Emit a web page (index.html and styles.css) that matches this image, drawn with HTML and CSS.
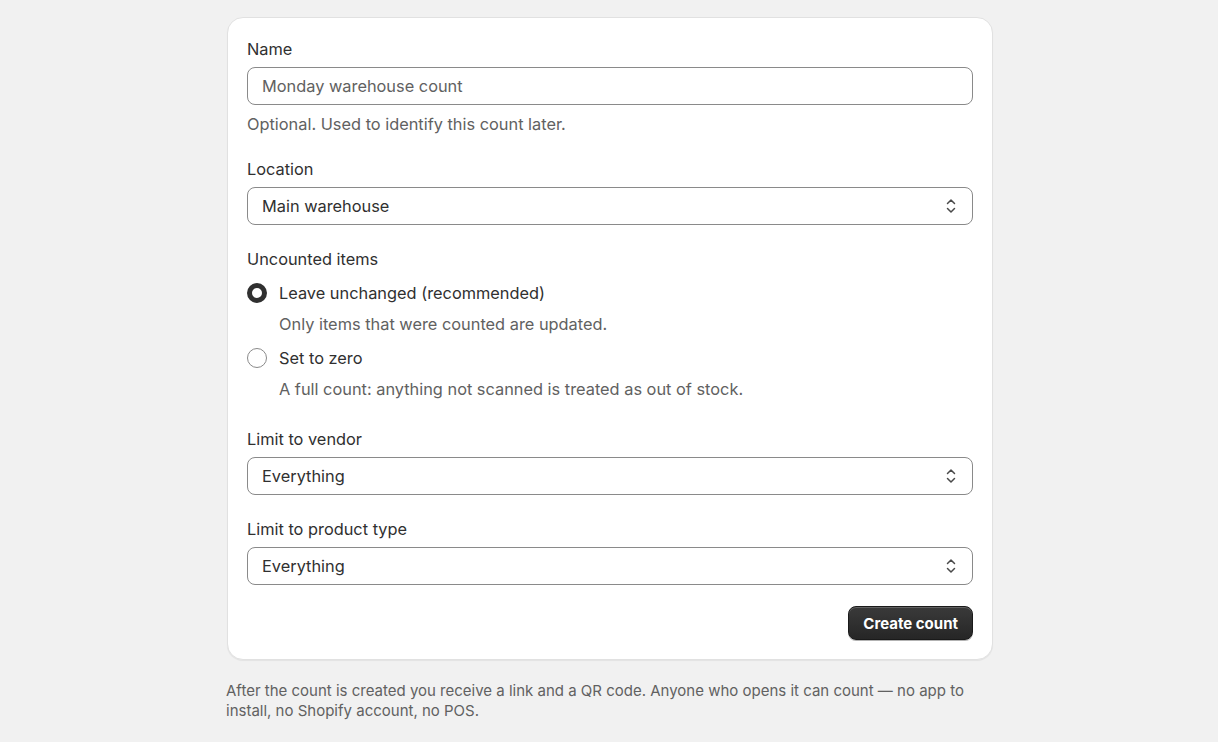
FILE: index.html
```html
<!DOCTYPE html>
<html lang="en">
<head>
<meta charset="utf-8">
<title>Create count</title>
<link rel="stylesheet" href="styles.css">
</head>
<body>
<main class="page">
  <form class="card">
    <div class="field">
      <label class="label">Name</label>
      <div class="input"><span class="placeholder">Monday warehouse count</span></div>
      <p class="help">Optional. Used to identify this count later.</p>
    </div>
    <div class="field">
      <label class="label">Location</label>
      <div class="input select"><span class="value">Main warehouse</span>
        <svg class="chev" width="12" height="18" viewBox="0 0 12 18"><path d="M2.5 6.5 6 3l3.5 3.5M2.5 11.5 6 15l3.5-3.5" fill="none" stroke="#4a4a4a" stroke-width="1.5" stroke-linecap="round" stroke-linejoin="round"/></svg>
      </div>
    </div>
    <div class="field radios">
      <label class="label">Uncounted items</label>
      <div class="radio-row">
        <span class="radio checked"></span><span class="radio-label">Leave unchanged (recommended)</span>
      </div>
      <p class="radio-desc">Only items that were counted are updated.</p>
      <div class="radio-row second">
        <span class="radio"></span><span class="radio-label">Set to zero</span>
      </div>
      <p class="radio-desc">A full count: anything not scanned is treated as out of stock.</p>
    </div>
    <div class="field after-radios">
      <label class="label">Limit to vendor</label>
      <div class="input select"><span class="value">Everything</span>
        <svg class="chev" width="12" height="18" viewBox="0 0 12 18"><path d="M2.5 6.5 6 3l3.5 3.5M2.5 11.5 6 15l3.5-3.5" fill="none" stroke="#4a4a4a" stroke-width="1.5" stroke-linecap="round" stroke-linejoin="round"/></svg>
      </div>
    </div>
    <div class="field product">
      <label class="label">Limit to product type</label>
      <div class="input select"><span class="value">Everything</span>
        <svg class="chev" width="12" height="18" viewBox="0 0 12 18"><path d="M2.5 6.5 6 3l3.5 3.5M2.5 11.5 6 15l3.5-3.5" fill="none" stroke="#4a4a4a" stroke-width="1.5" stroke-linecap="round" stroke-linejoin="round"/></svg>
      </div>
    </div>
    <div class="actions">
      <button type="button" class="btn">Create count</button>
    </div>
  </form>
  <p class="footnote">After the count is created you receive a link and a QR code. Anyone who opens it can count — no app to install, no Shopify account, no POS.</p>
</main>
</body>
</html>
```
FILE: styles.css
```css
* { box-sizing: border-box; }
html, body { margin: 0; padding: 0; }
body {
  background: #f1f1f1;
  font-family: Inter, "Noto Sans", "Liberation Sans", sans-serif;
  color: #303030;
  font-size: 16.35px;
}
.page {
  width: 766px;
  margin: 0 auto;
  padding-top: 17px;
  transform: translateX(1px);
}
.card {
  background: #fff;
  border: 1px solid #e1e1e1;
  border-radius: 16px;
  box-shadow: 0 1px 1px rgba(0,0,0,0.06);
  padding: 19px 19px 19px;
  display: flex;
  flex-direction: column;
  gap: 21px;
}
.field { display: flex; flex-direction: column; }
.label {
  line-height: 24px;
  color: #303030;
  margin-bottom: 6px;
}
.input {
  height: 38px;
  border: 1px solid #8a8a8a;
  border-radius: 8px;
  display: flex;
  align-items: center;
  padding: 0 14px;
}
.placeholder { color: #616161; }
.value { color: #303030; flex: 1; }
.chev { margin-right: 1px; }
.help {
  margin: 7px 0 0;
  line-height: 24px;
  color: #616161;
}
.radios { margin-top: 1px; }
.radios .label { margin-bottom: 10px; }
.radio-row {
  display: flex;
  align-items: center;
  height: 24px;
  gap: 12px;
}
.radio-row.second { margin-top: 10px; }
.radio {
  width: 20px;
  height: 20px;
  border-radius: 50%;
  border: 1px solid #8a8a8a;
  background: #fff;
  flex: none;
}
.radio.checked { border: 5.5px solid #303030; }
.radio-label { color: #303030; }
.radio-desc {
  margin: 7px 0 0 32px;
  line-height: 24px;
  color: #616161;
}
.after-radios { margin-top: 5px; }
.product { margin-top: 1px; }
.actions { display: flex; justify-content: flex-end; }
.btn {
  height: 34px;
  padding: 0 14px;
  border-radius: 8px;
  border: 1px solid #1a1a1a;
  background: linear-gradient(#3a3a3a, #262626);
  box-shadow: inset 0 1px 0 rgba(255,255,255,0.2), 0 1px 0 rgba(0,0,0,0.3);
  color: #fff;
  font-family: inherit;
  font-weight: 700;
  font-size: 15px;
}
.footnote {
  margin: 21px 0 0 -1px;
  font-size: 15px;
  line-height: 20px;
  color: #616161;
}
```
